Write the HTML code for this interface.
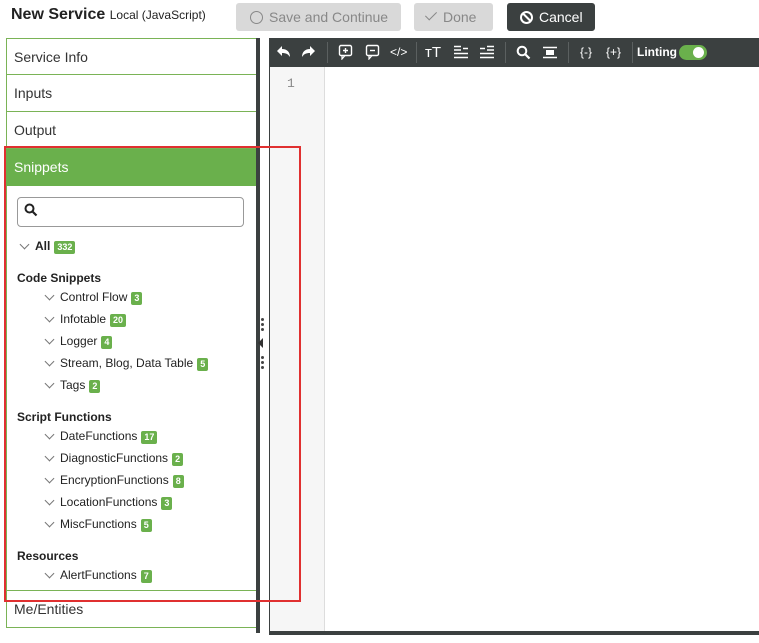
<!DOCTYPE html>
<html><head><meta charset="utf-8"><style>
*{box-sizing:border-box;margin:0;padding:0}
body{width:759px;height:643px;background:#fff;font-family:"Liberation Sans",Arial,sans-serif;position:relative;overflow:hidden;color:#222}
.abs{position:absolute}
.btn{position:absolute;top:3px;height:28px;border-radius:3px;font-size:14px;line-height:28px;padding-left:14px}
.row{position:absolute;left:6px;width:251px;height:37px;border:1px solid #7ab356;border-top:none;font-size:14px;line-height:36px;padding-left:7px;color:#333}
.badge{display:inline-block;background:#6ab04c;color:#fff;font-size:9px;font-weight:bold;line-height:13px;padding:0 3px;border-radius:2px;vertical-align:0px;margin-left:4px}
.it{position:absolute;left:60px;font-size:12px;color:#222}
.chev{position:absolute;width:7px;height:7px;border-right:1px solid #777;border-bottom:1px solid #777;transform:rotate(45deg)}
.hd{position:absolute;left:17px;font-size:12px;font-weight:bold}
.tb{position:absolute;top:38px;height:29px;color:#fff;font-size:13px;line-height:29px}
.sep{position:absolute;top:42px;width:1px;height:21px;background:#5b6060}
.dot{position:absolute;left:261px;width:3px;height:3px;background:#444;border-radius:50%}
</style></head><body>
<div class="abs" style="left:11px;top:6px;font-size:16px;font-weight:bold;color:#222">New Service <span style="font-size:12px;font-weight:normal">Local (JavaScript)</span></div>
<div class="btn" style="left:236px;width:165px;background:#d9d9d9;color:#888"><span style="display:inline-block;width:13px;height:13px;border:1.5px solid #888;border-radius:50%;vertical-align:-2px;margin-right:6px"></span>Save and Continue</div>
<div class="btn" style="left:414px;width:79px;background:#d9d9d9;color:#888"><span style="display:inline-block;width:6px;height:11px;border-right:1.5px solid #888;border-bottom:1.5px solid #888;transform:rotate(45deg);vertical-align:2px;margin-right:9px"></span>Done</div>
<div class="btn" style="left:507px;width:88px;background:#3b4040;color:#fff;padding-left:13px"><span style="display:inline-block;width:13px;height:13px;border:2px solid #fff;border-radius:50%;vertical-align:-2px;margin-right:6px;position:relative"><span style="position:absolute;left:3.5px;top:-1px;width:2px;height:11px;background:#fff;transform:rotate(-45deg)"></span></span>Cancel</div>

<div class="row" style="top:38px;border-top:1px solid #7ab356;height:37px">Service Info</div>
<div class="row" style="top:75px">Inputs</div>
<div class="row" style="top:112px">Output</div>
<div class="row" style="top:149px;background:#6ab04c;color:#fff;border-color:#6ab04c">Snippets</div>
<div class="abs" style="left:6px;top:186px;width:251px;height:404px;border-left:1px solid #7ab356"></div>
<div class="row" style="top:590px;border-top:1px solid #7ab356;height:38px">Me/Entities</div>

<div class="abs" style="left:17px;top:197px;width:227px;height:30px;border:1px solid #999;border-radius:4px"></div>
<svg class="abs" style="left:24px;top:203px" width="14" height="14"><circle cx="5.5" cy="5.5" r="4" stroke="#222" stroke-width="2" fill="none"/><line x1="8.5" y1="8.5" x2="12.5" y2="12.5" stroke="#222" stroke-width="2.2"/></svg>

<div class="chev" style="left:21px;top:241px"></div>
<div class="abs" style="left:35px;top:239px;font-size:12px;font-weight:bold">All<span class="badge">332</span></div>
<div class="hd" style="top:271px">Code Snippets</div>
<div class="chev" style="left:46px;top:292px"></div><div class="it" style="top:290px">Control Flow<span class="badge">3</span></div>
<div class="chev" style="left:46px;top:314px"></div><div class="it" style="top:312px">Infotable<span class="badge">20</span></div>
<div class="chev" style="left:46px;top:336px"></div><div class="it" style="top:334px">Logger<span class="badge">4</span></div>
<div class="chev" style="left:46px;top:358px"></div><div class="it" style="top:356px">Stream, Blog, Data Table<span class="badge">5</span></div>
<div class="chev" style="left:46px;top:380px"></div><div class="it" style="top:378px">Tags<span class="badge">2</span></div>
<div class="hd" style="top:410px">Script Functions</div>
<div class="chev" style="left:46px;top:431px"></div><div class="it" style="top:429px">DateFunctions<span class="badge">17</span></div>
<div class="chev" style="left:46px;top:453px"></div><div class="it" style="top:451px">DiagnosticFunctions<span class="badge">2</span></div>
<div class="chev" style="left:46px;top:475px"></div><div class="it" style="top:473px">EncryptionFunctions<span class="badge">8</span></div>
<div class="chev" style="left:46px;top:497px"></div><div class="it" style="top:495px">LocationFunctions<span class="badge">3</span></div>
<div class="chev" style="left:46px;top:519px"></div><div class="it" style="top:517px">MiscFunctions<span class="badge">5</span></div>
<div class="hd" style="top:549px">Resources</div>
<div class="chev" style="left:46px;top:570px"></div><div class="it" style="top:568px">AlertFunctions<span class="badge">7</span></div>

<div class="abs" style="left:256px;top:38px;width:4px;height:595px;background:#3b4040"></div>
<div class="dot" style="top:318px"></div><div class="dot" style="top:323px"></div><div class="dot" style="top:328px"></div>
<div class="abs" style="left:258px;top:338px;width:0;height:0;border-top:5px solid transparent;border-bottom:5px solid transparent;border-right:5px solid #333"></div>
<div class="dot" style="top:356px"></div><div class="dot" style="top:361px"></div><div class="dot" style="top:366px"></div>

<div class="abs" style="left:269px;top:38px;width:490px;height:597px;border-left:1px solid #3b4040;border-bottom:4px solid #3b4040"></div>
<div class="abs" style="left:270px;top:67px;width:55px;height:564px;background:#f6f6f6;border-right:1px solid #ddd"></div>
<div class="abs" style="left:287px;top:76px;font-family:'Liberation Mono',monospace;font-size:13px;color:#888">1</div>
<div class="abs" style="left:269px;top:38px;width:490px;height:29px;background:#3b4040"></div>
<svg class="abs" style="left:276px;top:45px" width="16" height="14"><path d="M1 6 L6 1 L6 4 C11 4 14 7 14 12 C12 9 10 8 6 8 L6 11 Z" fill="#fff"/></svg>
<svg class="abs" style="left:300px;top:45px" width="16" height="14"><path d="M15 6 L10 1 L10 4 C5 4 2 7 2 12 C4 9 6 8 10 8 L10 11 Z" fill="#fff"/></svg>
<div class="sep" style="left:327px"></div>
<svg class="abs" style="left:338px;top:44px" width="16" height="16"><rect x="1.5" y="1.5" width="12" height="10" rx="1.5" fill="none" stroke="#fff" stroke-width="1.4"/><path d="M4 11.5 L4 15 L7 11.5" fill="none" stroke="#fff" stroke-width="1.2"/><path d="M7.5 4v5M5 6.5h5" stroke="#fff" stroke-width="1.4"/></svg>
<svg class="abs" style="left:365px;top:44px" width="16" height="16"><rect x="1.5" y="1.5" width="12" height="10" rx="1.5" fill="none" stroke="#fff" stroke-width="1.4"/><path d="M4 11.5 L4 15 L7 11.5" fill="none" stroke="#fff" stroke-width="1.2"/><path d="M5 6.5h5" stroke="#fff" stroke-width="1.4"/></svg>
<div class="tb" style="left:390px;font-size:12px">&lt;/&gt;</div>
<div class="sep" style="left:416px"></div>
<div class="tb" style="left:425px;font-size:15px">ᴛT</div>
<svg class="abs" style="left:453px;top:45px" width="16" height="14"><path d="M1 1.5h7M1 5h7M1 8.5h14M1 12.5h14M10 3.5h5" stroke="#fff" stroke-width="1.6"/></svg>
<svg class="abs" style="left:479px;top:45px" width="16" height="14"><path d="M8 1.5h7M8 5h7M1 8.5h14M1 12.5h14M1 3.5h5" stroke="#fff" stroke-width="1.6"/></svg>
<div class="sep" style="left:505px"></div>
<svg class="abs" style="left:516px;top:45px" width="15" height="15"><circle cx="6" cy="6" r="4.3" stroke="#fff" stroke-width="2" fill="none"/><line x1="9" y1="9" x2="13.5" y2="13.5" stroke="#fff" stroke-width="2.2"/></svg>
<svg class="abs" style="left:542px;top:45px" width="16" height="15"><path d="M1 2.5h14M1 12.5h14" stroke="#fff" stroke-width="1.6"/><rect x="4" y="5" width="8" height="5" fill="#fff"/></svg>
<div class="sep" style="left:568px"></div>
<div class="tb" style="left:580px;font-size:12px">{-}</div>
<div class="tb" style="left:606px;font-size:12px">{+}</div>
<div class="sep" style="left:632px"></div>
<div class="tb" style="left:637px;font-size:12px;font-weight:bold">Linting</div>
<div class="abs" style="left:679px;top:45px;width:28px;height:15px;border-radius:8px;background:#6ab04c"></div>
<div class="abs" style="left:693px;top:47px;width:11px;height:11px;border-radius:50%;background:#fff"></div>

<div class="abs" style="left:4px;top:146px;width:297px;height:456px;border:2px solid #e03030"></div>
</body></html>
